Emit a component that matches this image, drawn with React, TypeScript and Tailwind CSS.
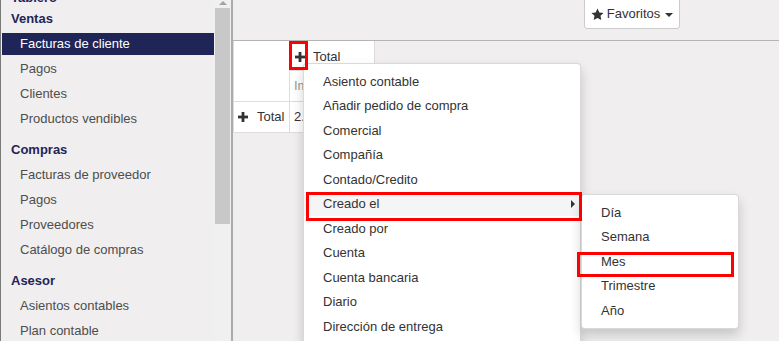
import React from 'react'

const font = "font-['Liberation_Sans',Arial,Helvetica,sans-serif]"

type Section = { title: string; items: string[]; first?: boolean }

const sections: Section[] = [
  { title: 'Ventas', items: ['Facturas de cliente', 'Pagos', 'Clientes', 'Productos vendibles'], first: true },
  { title: 'Compras', items: ['Facturas de proveedor', 'Pagos', 'Proveedores', 'Catálogo de compras'] },
  { title: 'Asesor', items: ['Asientos contables', 'Plan contable', 'Impuestos'] },
]

const groupBy = [
  'Asiento contable',
  'Añadir pedido de compra',
  'Comercial',
  'Compañía',
  'Contado/Credito',
  'Creado el',
  'Creado por',
  'Cuenta',
  'Cuenta bancaria',
  'Diario',
  'Dirección de entrega',
  'Empresa',
]

const intervals = ['Día', 'Semana', 'Mes', 'Trimestre', 'Año']

// icono "+" de Font Awesome (trazo grueso)
function PlusIcon() {
  return (
    <svg width="10" height="10" viewBox="0 0 10 10" className="shrink-0">
      <rect x="3.6" y="0" width="2.8" height="10" fill="#333" />
      <rect x="0" y="3.6" width="10" height="2.8" fill="#333" />
    </svg>
  )
}

function StarIcon() {
  return (
    <svg width="13" height="13" viewBox="0 0 24 24" className="shrink-0">
      <path
        d="M12 1l3.4 7.1 7.8 1-5.7 5.4 1.5 7.7L12 18.4l-7 3.8 1.5-7.7L.8 9.1l7.8-1z"
        fill="#333"
      />
    </svg>
  )
}

function Sidebar() {
  return (
    <aside className="w-[214px] shrink-0 overflow-hidden border-l border-[#7a7a7a]">
      <div className="-mt-[12px]">
        <div className="flex h-[20px] items-center pl-[10px] font-bold text-[#1f2557]">Tablero</div>
        {sections.map((s) => (
          <div key={s.title}>
            <div
              className={`flex h-[22px] items-center pl-[10px] font-bold text-[#1f2557] ${
                s.first ? 'mt-0' : 'mt-[9px]'
              }`}
            >
              {s.title}
            </div>
            {s.items.map((it, i) => {
              const active = s.first && i === 0
              return (
                <div
                  key={it + i}
                  className={`ml-px mt-[3px] flex h-[22px] items-center pl-[18px] ${
                    active ? 'bg-[#1f2557] text-white' : 'text-[#4d4d4d]'
                  }`}
                >
                  {it}
                </div>
              )
            })}
          </div>
        ))}
      </div>
    </aside>
  )
}

function Scrollbar() {
  return (
    <div className="relative w-[17px] shrink-0 bg-[#f0f0f0]">
      <div className="absolute left-[5px] top-[1px] h-0 w-0 border-x-[4px] border-b-[4px] border-x-transparent border-b-[#a3a3a3]" />
      <div className="absolute left-[1px] top-[8px] h-[216px] w-[15px] bg-[#c8c8c8]" />
    </div>
  )
}

function PivotTable() {
  return (
    <div className="grid w-[141px] grid-cols-[56px_85px] grid-rows-[30px_31px_31px] border-l border-[#ddd] bg-white text-[#333]">
      <div className="row-span-2 border-b border-r border-[#ddd]" />
      <div className="flex items-center gap-[8px] border-b border-r border-[#ddd] pl-[5px] pt-[2px]">
        <PlusIcon />
        <span>Total</span>
      </div>
      <div className="flex items-center overflow-hidden whitespace-nowrap border-b border-r border-[#ddd] pl-[4px] text-[#999]">
        Importe total
      </div>
      <div className="flex items-center gap-[9px] border-b border-r border-[#ddd] pl-[4px]">
        <PlusIcon />
        <span>Total</span>
      </div>
      <div className="flex items-center overflow-hidden whitespace-nowrap border-b border-r border-[#ddd] pl-[4px]">
        2.450,00
      </div>
    </div>
  )
}

export default function App() {
  return (
    <div className={`relative flex h-[341px] w-[779px] overflow-hidden bg-[#f0eeee] text-[13px] ${font}`}>
      <Sidebar />
      <Scrollbar />
      <div className="w-[2px] shrink-0 bg-[#ababab]" />

      <main className="flex min-w-0 flex-1 flex-col">
        <div className="flex h-[41px] shrink-0 justify-end border-b border-[#b4b4b4] pr-[99px]">
          <button className="-mt-px flex h-[30px] w-[96px] items-center justify-center gap-[3px] rounded-b-[3px] border border-[#ccc] bg-white text-[#333]">
            <StarIcon />
            <span>Favoritos</span>
            <span className="ml-[2px] mt-[1px] h-0 w-0 border-x-[4px] border-t-[4px] border-x-transparent border-t-[#333]" />
          </button>
        </div>
        <PivotTable />
      </main>

      {/* menú "agrupar por" */}
      <div className="absolute left-[303px] top-[63px] w-[278px] rounded-[4px] border border-[rgba(0,0,0,0.15)] bg-white py-[5px] text-[#333] shadow-[0_6px_12px_rgba(0,0,0,0.175)]">
        {groupBy.map((g) => (
          <div
            key={g}
            className={`relative flex h-[24.5px] items-center pl-[19px] ${g === 'Creado el' ? 'bg-[#f5f5f5]' : ''}`}
          >
            {g}
            {g === 'Creado el' && (
              <span className="absolute right-[5px] top-[8px] h-0 w-0 border-y-[4px] border-l-[4px] border-y-transparent border-l-[#333]" />
            )}
          </div>
        ))}
      </div>

      {/* submenú de intervalos */}
      <div className="absolute left-[581px] top-[194px] w-[158px] rounded-[4px] border border-[rgba(0,0,0,0.15)] bg-white py-[5px] text-[#333] shadow-[0_6px_12px_rgba(0,0,0,0.175)]">
        {intervals.map((d) => (
          <div key={d} className="flex h-[24.5px] items-center pl-[19px]">
            {d}
          </div>
        ))}
      </div>

      {/* marcas rojas */}
      <div className="pointer-events-none absolute left-[289px] top-[41px] h-[29px] w-[19px] border-[3px] border-[#f00]" />
      <div className="pointer-events-none absolute left-[306px] top-[192px] h-[29px] w-[276px] border-[3px] border-[#f00]" />
      <div className="pointer-events-none absolute left-[577px] top-[252px] h-[25px] w-[157px] border-[3px] border-[#f00]" />
    </div>
  )
}
